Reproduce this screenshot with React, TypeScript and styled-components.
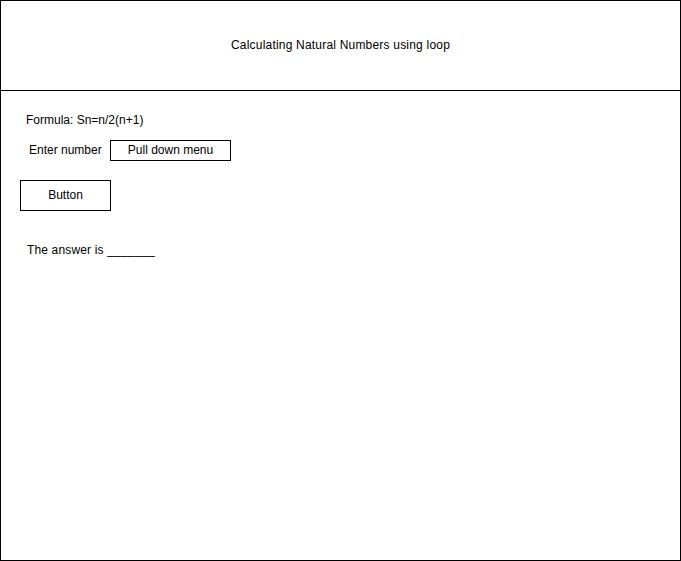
import styled, { createGlobalStyle } from "styled-components";

const GlobalStyle = createGlobalStyle`
  html, body {
    margin: 0;
    padding: 0;
    background: #fff;
  }
  body {
    font-family: "Liberation Sans", Arial, Helvetica, sans-serif;
    font-size: 12px;
    color: #000;
  }
`;

const Frame = styled.div`
  box-sizing: border-box;
  width: 681px;
  height: 561px;
  border: 1px solid #000;
  display: flex;
  flex-direction: column;
`;

const Header = styled.header`
  box-sizing: border-box;
  height: 90px;
  border-bottom: 1px solid #000;
  display: flex;
  align-items: center;
  justify-content: center;
  padding-bottom: 2px;
`;

const Title = styled.h1`
  margin: 0;
  font-size: 12px;
  font-weight: normal;
  line-height: 14px;
  letter-spacing: 0.2px;
`;

const Body = styled.main`
  display: flex;
  flex-direction: column;
  align-items: flex-start;
  padding: 22px 0 0 18px;
`;

const Line = styled.p<{ $indent: number; $top?: number; $spacing?: number }>`
  margin: ${(p) => p.$top ?? 0}px 0 0 ${(p) => p.$indent}px;
  line-height: 14px;
  letter-spacing: ${(p) => p.$spacing ?? 0}px;
`;

const Row = styled.div<{ $indent: number }>`
  display: flex;
  align-items: center;
  margin: 13px 0 0 ${(p) => p.$indent}px;
`;

const Label = styled.label`
  width: 81px;
  line-height: 14px;
  padding-bottom: 1px;
`;

const Select = styled.div`
  box-sizing: border-box;
  width: 121px;
  height: 21px;
  border: 1px solid #000;
  display: flex;
  align-items: center;
  justify-content: center;
  line-height: 14px;
  padding-bottom: 1px;
`;

const Button = styled.button`
  box-sizing: border-box;
  width: 91px;
  height: 31px;
  margin: 19px 0 0 1px;
  border: 1px solid #000;
  border-radius: 0;
  background: #fff;
  color: #000;
  font-family: inherit;
  font-size: 12px;
  padding: 0 0 2px;
`;

export default function App() {
  return (
    <>
      <GlobalStyle />
      <Frame>
        <Header>
          <Title>Calculating Natural Numbers using loop</Title>
        </Header>
        <Body>
          <Line $indent={7}>Formula: Sn=n/2(n+1)</Line>
          <Row $indent={10}>
            <Label>Enter number</Label>
            <Select>Pull down menu</Select>
          </Row>
          <Button>Button</Button>
          <Line $indent={8} $top={32} $spacing={0.15}>
            The answer is _______
          </Line>
        </Body>
      </Frame>
    </>
  );
}
